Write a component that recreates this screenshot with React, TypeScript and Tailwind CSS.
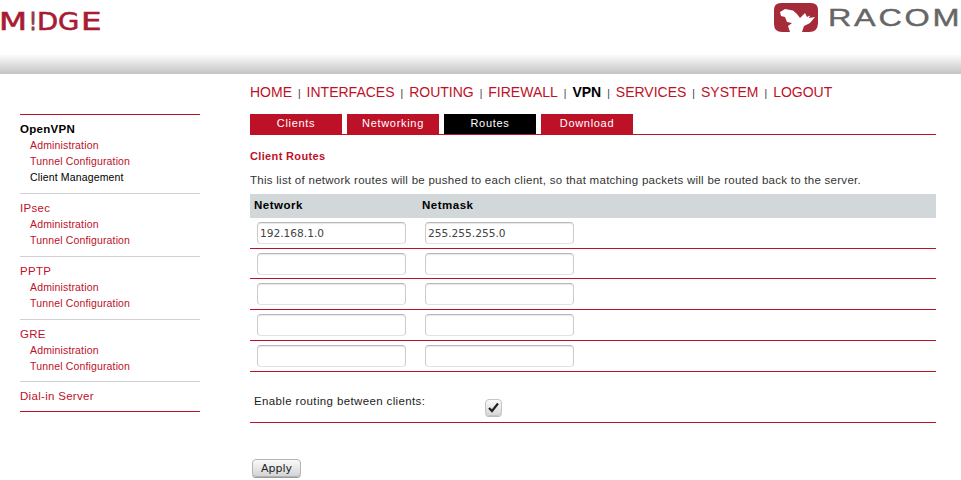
const topNav = ["HOME", "INTERFACES", "ROUTING", "FIREWALL", "VPN", "SERVICES", "SYSTEM", "LOGOUT"];
const tabs = ["Clients", "Networking", "Routes", "Download"];
const groups = [
  { title: "OpenVPN", active: true, box: "pt-[6px] pb-[8px]", head: "leading-[16px]", links: ["Administration", "Tunnel Configuration", "Client Management"] },
  { title: "IPsec", box: "border-t pt-[7px] pb-[8px]", head: "leading-[15px]", links: ["Administration", "Tunnel Configuration"] },
  { title: "PPTP", box: "border-t pt-[7px] pb-[8px]", head: "leading-[15px]", links: ["Administration", "Tunnel Configuration"] },
  { title: "GRE", box: "border-t pt-[6px] pb-[7px]", head: "leading-[16px]", links: ["Administration", "Tunnel Configuration"] },
  { title: "Dial-in Server", box: "border-t pt-[7px] pb-[7px]", head: "leading-[15px]", links: [] },
];
const routes = [
  { net: "192.168.1.0", mask: "255.255.255.0", row: "h-[31px]" },
  { net: "", mask: "", row: "h-[30px]" },
  { net: "", mask: "", row: "h-[31px]" },
  { net: "", mask: "", row: "h-[31px]" },
  { net: "", mask: "", row: "h-[31px]" },
];

function RacomMark() {
  return (
    <svg width="44" height="30" viewBox="0 0 44 30" className="shrink-0">
      <path d="M7 0H37Q44 0 44 7V20Q44 29 35 29H8Q0 29 0 21V7Q0 0 7 0Z" fill="#a62b38" />
      <path
        d="M6 9L11 6L19 7.5L23 11L26 15L31 10L33 14L36 12.5L35 15L41 14L36 20L30 23L28 29H16L14 23L18 20L13 19L11 14L7 13Z"
        fill="#fff"
      />
    </svg>
  );
}

function RouteInput({ value }: { value: string }) {
  return (
    <input
      readOnly
      value={value}
      className="h-[22px] w-[149px] rounded-[4px] border border-x-[#cccccc] border-t-[#b8b8b8] border-b-[#e2e2e2] bg-white px-[2px] font-['DejaVu_Sans'] text-[10.6px] text-[#444] shadow-[inset_0_1px_1px_#e8e8e8] outline-none"
    />
  );
}

export default function App() {
  return (
    <div className="h-[480px] w-[961px] overflow-hidden bg-white font-['Liberation_Sans',sans-serif]">
      <header className="flex h-[55px] items-start justify-between">
        <div className="ml-[-1px] mt-[7px] flex font-['DejaVu_Sans'] text-[25px] leading-[29px] text-[#a81c33] [-webkit-text-stroke:0.6px_#a81c33]">
          <span className="inline-block w-[22px] origin-left scale-x-[1.3]">M</span>
          <span className="ml-[7.5px] mr-[-2px] inline-block w-[10px] origin-left scale-x-[0.8] text-[#8c3a48] [-webkit-text-stroke:1px_#8c3a48]">!</span>
          <span className="mr-[1px] inline-block w-[20px] origin-left scale-x-[1.1]">D</span>
          <span className="mr-[2px] inline-block w-[21px] origin-left scale-x-[1.1]">G</span>
          <span className="inline-block w-[16px] origin-left scale-x-[1.3]">E</span>
        </div>
        <div className="mr-[34px] mt-[3px] flex items-start gap-[10px]">
          <RacomMark />
          <div className="mt-[2px] w-[99px] origin-left scale-x-[1.35] font-['Liberation_Sans'] text-[24px] leading-[26px] tracking-[2px] text-[#666] [-webkit-text-stroke:0.4px_#666]">
            RACOM
          </div>
        </div>
      </header>
      <div className="h-[19px] bg-gradient-to-b from-[#fbfbfb] to-[#c4c4c4]" />

      <div className="flex">
        <aside className="ml-[20px] mt-[40px] w-[180px]">
          <div className="border-y border-y-[#bd1128]">
            {groups.map((g) => (
              <div key={g.title} className={`border-[#d0d0d6] ${g.box}`}>
                <div className={`text-[11.5px] tracking-[0.3px] ${g.head} ${g.active ? "font-bold text-black" : "text-[#bd1128]"}`}>
                  {g.title}
                </div>
                {g.links.map((l) => (
                  <div
                    key={l}
                    className={`ml-[10px] text-[10.5px] leading-[16px] tracking-[0.15px] ${l === "Client Management" ? "text-black" : "text-[#bd1128]"}`}
                  >
                    {l}
                  </div>
                ))}
              </div>
            ))}
          </div>
        </aside>

        <main className="ml-[50px] w-[686px]">
          <nav className="mt-[9px] flex h-[18px] items-center text-[14px] leading-[18px]">
            {topNav.map((n, i) => (
              <span key={n} className="flex items-center">
                {i > 0 && <span className="mx-[6px] mt-[3px] text-[10px] text-[#333]">|</span>}
                <span className={n === "VPN" ? "font-bold text-black" : "text-[#bd1128]"}>{n}</span>
              </span>
            ))}
          </nav>

          <div className="mt-[13px] flex h-[21px] gap-[5px] border-b border-[#bd1128]">
            {tabs.map((t) => (
              <div
                key={t}
                className={`flex h-[20px] w-[92px] items-center justify-center pb-[2px] text-[11px] tracking-[0.7px] text-white ${t === "Routes" ? "bg-black" : "bg-[#bd1128]"}`}
              >
                {t}
              </div>
            ))}
          </div>

          <h2 className="mt-[14px] text-[11px] font-bold leading-[14px] tracking-[0.35px] text-[#bd1128]">Client Routes</h2>
          <p className="mt-[10px] text-[11.5px] leading-[14px] tracking-[0.27px] text-[#333]">
            This list of network routes will be pushed to each client, so that matching packets will be routed back to the server.
          </p>

          <div className="mt-[7px] flex h-[24px] items-center bg-[#d2d7d9] text-[11.5px] font-bold tracking-[0.5px] text-black">
            <div className="ml-[4px] w-[168px]">Network</div>
            <div>Netmask</div>
          </div>
          {routes.map((r, i) => (
            <div key={i} className={`flex gap-[19px] border-b border-[#bd1128] pl-[7px] pt-[4px] ${r.row}`}>
              <RouteInput value={r.net} />
              <RouteInput value={r.mask} />
            </div>
          ))}

          <div className="flex h-[51px] items-start border-b border-[#bd1128] pl-[4px]">
            <span className="mt-[22px] w-[231px] text-[11.5px] leading-[14px] tracking-[0.37px] text-[#222]">Enable routing between clients:</span>
            <span className="mt-[27px] flex h-[17px] w-[17px] items-center justify-center rounded-[4px] border border-[#c4c4c4] bg-gradient-to-b from-[#fafafa] to-[#d8d8d8] shadow-[0_1px_0_#bbb]">
              <svg width="13" height="11" viewBox="0 0 13 11">
                <path d="M2 6L5 9L11 1.5" fill="none" stroke="#222" strokeWidth="2.2" />
              </svg>
            </span>
          </div>

          <button className="ml-[2px] mt-[36px] flex h-[18px] w-[49px] items-center justify-center rounded-[4px] border border-[#b4b4b4] bg-gradient-to-b from-[#fafafa] to-[#d4d4d4] font-['DejaVu_Sans'] text-[11px] leading-none text-[#222] shadow-[0_1px_0_#999]">
            Apply
          </button>
        </main>
      </div>
    </div>
  );
}
